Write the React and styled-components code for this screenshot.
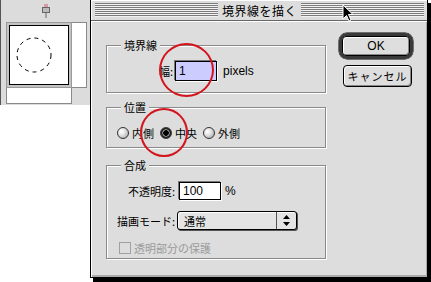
import React from 'react';
import styled, { createGlobalStyle } from 'styled-components';

const GlobalStyle = createGlobalStyle`
  html, body {
    margin: 0;
    padding: 0;
    background: #fff;
  }
  body {
    width: 431px;
    height: 282px;
    overflow: hidden;
    font-family: "Noto Sans CJK JP", "Liberation Sans", sans-serif;
    color: #000;
  }
`;

const Desktop = styled.div`
  position: relative;
  width: 431px;
  height: 282px;
  overflow: hidden;
  background: #fff;
`;

/* ---- palette window behind the dialog ---- */
const Palette = styled.div`
  position: absolute;
  left: 0;
  top: 0;
  width: 90px;
  height: 105px;
  box-sizing: border-box;
  background: #dcdcdc;
  border-left: 1px solid #555;
  display: flex;
  flex-direction: column;
`;

const PaletteHead = styled.div`
  height: 22px;
  display: flex;
  justify-content: center;
  padding-top: 4px;
  box-sizing: border-box;
`;

const PreviewRow = styled.div`
  display: flex;
  padding-left: 5px;
`;

const PreviewFrame = styled.div`
  width: 66px;
  height: 66px;
  box-sizing: border-box;
  background: #c4c4c4;
  border: 1px solid #9a9a9a;
  padding: 2px;
`;

const PreviewCanvas = styled.div`
  width: 100%;
  height: 100%;
  box-sizing: border-box;
  background: #fff;
  border: 1px solid #000;
  display: flex;
  align-items: center;
  justify-content: flex-start;
  padding-left: 4px;
`;

const PreviewStrip = styled.div`
  width: 15px;
  height: 66px;
  box-sizing: border-box;
  background: #fff;
  border: 1px solid #8a8a8a;
  border-left: none;
`;

const PreviewFoot = styled.div`
  width: 66px;
  height: 16px;
  margin-left: 5px;
  box-sizing: border-box;
  background: #fff;
  border: 1px solid #8a8a8a;
  border-top: none;
`;

/* ---- the dialog ---- */
const Dialog = styled.div`
  position: absolute;
  left: 90px;
  top: -1px;
  width: 338px;
  height: 279px;
  box-sizing: border-box;
  background: #dddddd;
  border: 1px solid #000;
  box-shadow: 3px 4px 0 #000;
  display: flex;
  flex-direction: column;
`;

const TitleBar = styled.div`
  height: 21px;
  box-sizing: border-box;
  border-bottom: 1px solid #666;
  box-shadow: inset 1px 1px 0 #fff;
  padding: 3px 3px 3px 4px;
  display: flex;
`;

const Stripes = styled.div`
  flex: 1;
  background: repeating-linear-gradient(
    to bottom,
    #7c7c7c 0px,
    #7c7c7c 1px,
    #f2f2f2 1px,
    #f2f2f2 2px
  );
  display: flex;
  justify-content: center;
  align-items: center;
`;

const Title = styled.span`
  background: #dddddd;
  padding: 0 4px;
  font-size: 12px;
  line-height: 15px;
  letter-spacing: 0.5px;
`;

const Body = styled.div`
  flex: 1;
  display: grid;
  grid-template-columns: 220px 74px;
  column-gap: 13px;
  padding: 0 14px 0 15px;
  box-shadow: inset 1px 1px 0 #fff, inset -1px -2px 0 #aaa;
`;

const Groups = styled.div`
  display: flex;
  flex-direction: column;
`;

const Group = styled.div`
  position: relative;
  box-sizing: border-box;
  height: ${p => p.$h}px;
  margin-top: ${p => p.$mt}px;
  border: 1px solid #8a8a8a;
  box-shadow: 1px 1px 0 #fff, inset 1px 1px 0 #fff;
`;

const GroupLabel = styled.span`
  position: absolute;
  top: -9px;
  left: 14px;
  padding: 0 3px;
  background: #dddddd;
  font-size: 11px;
  line-height: 16px;
`;

const WidthRow = styled.div`
  display: flex;
  align-items: center;
  padding: 15px 0 0 52px;
  font-size: 11px;
`;

const TextField = styled.div`
  box-sizing: border-box;
  width: 42px;
  height: ${p => p.$h}px;
  margin-left: 2px;
  background: ${p => (p.$active ? '#ccccff' : '#fff')};
  border: 1px solid #000;
  box-shadow: 1px 1px 0 #fff, -1px -1px 0 #777;
  font-family: "Liberation Sans", sans-serif;
  font-size: 12px;
  line-height: ${p => p.$h - 2}px;
  padding-left: 3px;
`;

const Unit = styled.span`
  margin-left: ${p => p.$gap || 6}px;
  font-family: "Liberation Sans", sans-serif;
  font-size: 12px;
`;

const RadioRow = styled.div`
  display: flex;
  align-items: center;
  padding: 17px 0 0 10px;
  font-size: 11px;
`;

const RadioItem = styled.label`
  display: flex;
  align-items: center;
  margin-right: 6px;
`;

const RadioDot = styled.span`
  box-sizing: border-box;
  width: 12px;
  height: 12px;
  border-radius: 50%;
  border: 1px solid #333;
  margin-right: 3px;
  background: ${p =>
    p.$on
      ? 'radial-gradient(circle at 50% 50%, #000 0 2.5px, #888 3px 3.5px, #222 4px)'
      : 'radial-gradient(circle at 35% 35%, #fff 0, #e6e6e6 35%, #9c9c9c 100%)'};
`;

const BlendGrid = styled.div`
  display: grid;
  grid-template-columns: 59px auto;
  column-gap: 2px;
  row-gap: 11px;
  align-items: center;
  justify-items: start;
  padding: 16px 0 0 9px;
  font-size: 11px;
`;

const FieldLabel = styled.span`
  justify-self: end;
  white-space: nowrap;
`;

const FieldWrap = styled.div`
  display: flex;
  align-items: center;
`;

const Popup = styled.div`
  box-sizing: border-box;
  width: 120px;
  height: 19px;
  border: 1px solid #000;
  border-radius: 3px;
  box-shadow: 1px 1px 0 #555, inset 1px 1px 0 #fff;
  background: #e4e4e4;
  display: flex;
  align-items: center;
`;

const PopupText = styled.span`
  flex: 1;
  padding-left: 6px;
  font-size: 11px;
`;

const PopupArrows = styled.span`
  width: 19px;
  height: 100%;
  border-left: 1px solid #555;
  display: flex;
  align-items: center;
  justify-content: center;
`;

const CheckRow = styled.div`
  grid-column: 1 / span 2;
  display: flex;
  align-items: center;
  margin-top: -1px;
  margin-left: 3px;
  color: #9a9a9a;
`;

const CheckBox = styled.span`
  box-sizing: border-box;
  width: 12px;
  height: 12px;
  border: 1px solid #a0a0a0;
  margin-right: 3px;
`;

const Buttons = styled.div`
  display: flex;
  flex-direction: column;
  align-items: flex-end;
  padding-top: 12px;
`;

const DefaultRing = styled.div`
  box-sizing: border-box;
  width: 74px;
  height: 26px;
  border: 3px solid #3a3a3a;
  border-radius: 8px;
  box-shadow: 0 0 0 0.5px #000;
  display: flex;
`;

const Button = styled.div`
  box-sizing: border-box;
  width: ${p => (p.$fill ? '100%' : '69px')};
  height: ${p => (p.$fill ? '100%' : '22px')};
  margin: ${p => (p.$fill ? '0' : '6px 1px 0 0')};
  border: 1px solid #000;
  border-radius: 4px;
  background: #dedede;
  box-shadow: inset 1px 1px 0 #fff, inset -1px -1px 0 #888;
  display: flex;
  align-items: center;
  justify-content: center;
  font-size: ${p => (p.$latin ? '12px' : '11px')};
  font-family: ${p =>
    p.$latin ? '"Liberation Sans", sans-serif' : '"Noto Sans CJK JP", sans-serif'};
  letter-spacing: ${p => (p.$latin ? '0' : '1px')};
`;

const Mark = styled.div`
  position: absolute;
  box-sizing: border-box;
  border: 2px solid #d4141c;
  border-radius: 50%;
`;

const Cursor = styled.svg`
  position: absolute;
  left: 342px;
  top: 4px;
`;

const DashedCircle = () => (
  <svg width="40" height="40" viewBox="0 0 40 40">
    <circle cx="20" cy="20" r="17" fill="none" stroke="#000" strokeWidth="1" strokeDasharray="4 4" />
  </svg>
);

const Thumb = () => (
  <svg width="8" height="14" viewBox="0 0 8 14">
    <rect x="2" y="0" width="4" height="3" fill="#d99aa6" />
    <rect x="0.5" y="3.5" width="7" height="5" fill="#bbb" stroke="#666" />
    <line x1="4" y1="8.5" x2="4" y2="14" stroke="#666" />
  </svg>
);

const UpDown = () => (
  <svg width="7" height="11" viewBox="0 0 7 11">
    <path d="M3.5 0 L7 4 L0 4 Z" fill="#000" />
    <path d="M0 7 L7 7 L3.5 11 Z" fill="#000" />
  </svg>
);

export default function App() {
  return (
    <Desktop>
      <GlobalStyle />
      <Palette>
        <PaletteHead>
          <Thumb />
        </PaletteHead>
        <PreviewRow>
          <PreviewFrame>
            <PreviewCanvas>
              <DashedCircle />
            </PreviewCanvas>
          </PreviewFrame>
          <PreviewStrip />
        </PreviewRow>
        <PreviewFoot />
      </Palette>

      <Dialog>
        <TitleBar>
          <Stripes>
            <Title>境界線を描く</Title>
          </Stripes>
        </TitleBar>
        <Body>
          <Groups>
            <Group $h={48} $mt={24}>
              <GroupLabel>境界線</GroupLabel>
              <WidthRow>
                <span>幅:</span>
                <TextField $h={20} $active>1</TextField>
                <Unit>pixels</Unit>
              </WidthRow>
            </Group>

            <Group $h={41} $mt={14}>
              <GroupLabel>位置</GroupLabel>
              <RadioRow>
                <RadioItem>
                  <RadioDot />
                  内側
                </RadioItem>
                <RadioItem>
                  <RadioDot $on />
                  中央
                </RadioItem>
                <RadioItem>
                  <RadioDot />
                  外側
                </RadioItem>
              </RadioRow>
            </Group>

            <Group $h={94} $mt={17}>
              <GroupLabel>合成</GroupLabel>
              <BlendGrid>
                <FieldLabel>不透明度:</FieldLabel>
                <FieldWrap>
                  <TextField $h={18}>100</TextField>
                  <Unit $gap={4}>%</Unit>
                </FieldWrap>
                <FieldLabel>描画モード:</FieldLabel>
                <Popup>
                  <PopupText>通常</PopupText>
                  <PopupArrows>
                    <UpDown />
                  </PopupArrows>
                </Popup>
                <CheckRow>
                  <CheckBox />
                  透明部分の保護
                </CheckRow>
              </BlendGrid>
            </Group>
          </Groups>

          <Buttons>
            <DefaultRing>
              <Button $fill $latin>OK</Button>
            </DefaultRing>
            <Button>キャンセル</Button>
          </Buttons>
        </Body>
      </Dialog>

      <Mark style={{ left: 159, top: 43, width: 55, height: 54 }} />
      <Mark style={{ left: 140, top: 108, width: 48, height: 49 }} />

      <Cursor width="12" height="19" viewBox="0 0 12 19">
        <path d="M1 1 L1 15 L4.5 11.5 L7 17 L9 16 L6.5 10.5 L11 10.5 Z" fill="#000" stroke="#fff" strokeWidth="1" />
      </Cursor>
    </Desktop>
  );
}
